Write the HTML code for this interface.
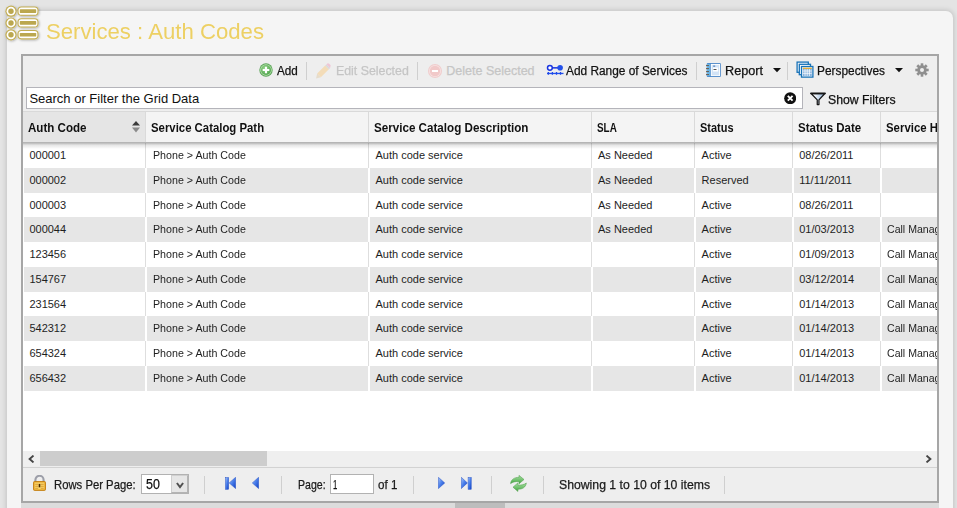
<!DOCTYPE html>
<html><head><meta charset="utf-8"><style>
*{box-sizing:border-box;margin:0;padding:0}
html,body{width:957px;height:508px;overflow:hidden;background:#e4e4e4;font-family:"Liberation Sans",sans-serif;}
.a{position:absolute}
.t{position:absolute;white-space:nowrap;line-height:1;transform-origin:0 0}
.hv2{-webkit-text-stroke:0.25px currentColor}
#panel{position:absolute;left:7px;top:11px;width:946px;height:520px;background:#f5f5f5;border-radius:7px;box-shadow:0 0 5px 1px rgba(0,0,0,.15)}
#grid{position:absolute;left:21px;top:54px;width:918px;height:449px;border:2px solid #a6a6a6;background:#fff}
#gc{position:absolute;left:0;top:0;width:937px;height:501px;overflow:hidden}
.sep{position:absolute;width:1px;background:#cfcfcf}
</style></head><body>
<div id="panel"></div>
<svg class="a" style="left:0;top:0.4px" width="45" height="45" viewBox="0 0 45 45">
  <defs><filter id="sh" x="-20%" y="-20%" width="140%" height="140%"><feDropShadow dx="0.8" dy="0.8" stdDeviation="0.9" flood-color="#000" flood-opacity=".3"/></filter></defs>
  <g filter="url(#sh)" fill="#c3ae55">
    <circle cx="11" cy="11.2" r="5.6"/><circle cx="11" cy="23" r="5.6"/><circle cx="11" cy="34.8" r="5.6"/>
    <rect x="17.5" y="6.4" width="21" height="9.4" rx="3.8"/><rect x="17.5" y="18.2" width="21" height="9.4" rx="3.8"/><rect x="17.5" y="30" width="21" height="9.4" rx="3.8"/>
  </g>
  <g fill="#fff">
    <circle cx="11" cy="11.2" r="4.4"/><circle cx="11" cy="23" r="4.4"/><circle cx="11" cy="34.8" r="4.4"/>
    <rect x="18.6" y="7.5" width="18.8" height="7.2" rx="2.8"/><rect x="18.6" y="19.3" width="18.8" height="7.2" rx="2.8"/><rect x="18.6" y="31.1" width="18.8" height="7.2" rx="2.8"/>
  </g>
  <g fill="#bba74f">
    <circle cx="11" cy="11.2" r="2.7"/><circle cx="11" cy="23" r="2.7"/><circle cx="11" cy="34.8" r="2.7"/>
    <rect x="19.8" y="9.3" width="16.4" height="3.6" rx="0.6"/><rect x="19.8" y="21.1" width="16.4" height="3.6" rx="0.6"/><rect x="19.8" y="32.9" width="16.4" height="3.6" rx="0.6"/>
  </g>
</svg>
<div class="t " style="left:46.30px;top:21.48px;font-size:22px;color:#edd063;transform:scaleX(1.0070);">Services : Auth Codes</div>
<div class="a" style="left:21px;top:503px;width:918px;height:10px;background:#dcdcdc"></div>
<div class="a" style="left:455px;top:503px;width:50px;height:10px;background:#bdbdbd"></div>
<div id="grid"></div>
<div id="gc">
<div class="a" style="left:23px;top:56px;width:914px;height:55px;background:#eeeeee"></div>
<svg class="a" style="left:259px;top:63px" width="14" height="14" viewBox="0 0 14 14">
 <defs><radialGradient id="ga" cx="0.4" cy="0.35" r="0.7"><stop offset="0" stop-color="#9ad88e"/><stop offset="1" stop-color="#4ea24c"/></radialGradient></defs>
 <circle cx="7" cy="7" r="6.7" fill="#5aa457"/><circle cx="7" cy="7" r="5.8" fill="#b9e3b0"/><circle cx="7" cy="7" r="5" fill="url(#ga)"/>
 <path d="M7 3.7v6.6M3.7 7h6.6" stroke="#fff" stroke-width="2.1"/></svg>
<div class="t hv2" style="left:277.00px;top:64.80px;font-size:12.5px;color:#111;transform:scaleX(0.9348);">Add</div>
<div class="sep" style="left:306px;top:62px;height:18px"></div>
<svg class="a" style="left:315px;top:62.5px" width="16" height="16" viewBox="0 0 16 16">
 <path d="M1 15.5 L2.2 10.6 L5.9 14.3 Z" fill="#e6dccb"/>
 <path d="M2.2 10.6 L10.2 2.6 L13.9 6.3 L5.9 14.3 Z" fill="#f3dcb8"/>
 <path d="M10.2 2.6 L11.4 1.4 L15.1 5.1 L13.9 6.3 Z" fill="#d9d9dc"/>
 <path d="M11.4 1.4 L12.4 0.4 Q13.2 -0.2 14.2 0.8 L15.2 1.8 Q16 2.8 15.4 3.6 L15.1 5.1 Z" fill="#efc6d6"/></svg>
<div class="t hv2" style="left:335.60px;top:64.80px;font-size:12.5px;color:#c5c5c5;transform:scaleX(0.9880);">Edit Selected</div>
<div class="sep" style="left:417px;top:62px;height:18px"></div>
<svg class="a" style="left:428px;top:64px" width="14" height="14" viewBox="0 0 14 14">
 <circle cx="7" cy="7" r="7" fill="#f0cccc"/><circle cx="7" cy="7" r="6" fill="#f7e2e2"/><circle cx="7" cy="7" r="5.2" fill="#f1c9c9"/><rect x="4" y="6" width="6" height="2" fill="#fff"/></svg>
<div class="t hv2" style="left:446.30px;top:64.80px;font-size:12.5px;color:#c5c5c5;">Delete Selected</div>
<svg class="a" style="left:546px;top:63px" width="18" height="13" viewBox="0 0 18 13">
 <circle cx="3.9" cy="4.8" r="2.4" fill="#fff" stroke="#1a35e0" stroke-width="1.5"/><rect x="6" y="4.1" width="6" height="1.5" fill="#1a35e0"/><circle cx="14.1" cy="4.8" r="2.8" fill="#2250ea"/>
 <rect x="1" y="9.8" width="16.5" height="1.3" fill="#2050ee"/><path d="M2.4 8.9v2.9M6.4 8.9v2.9M10.5 8.9v2.9M14.5 8.9v2.9" stroke="#1f48ea" stroke-width="1.3"/></svg>
<div class="t hv2" style="left:566.30px;top:64.80px;font-size:12.5px;color:#111;transform:scaleX(0.9501);">Add Range of Services</div>
<div class="sep" style="left:696px;top:62px;height:18px"></div>
<svg class="a" style="left:706px;top:63px" width="15" height="14" viewBox="0 0 15 14">
 <rect x="0.8" y="0" width="14" height="14" rx="1" fill="#4a86c8"/><rect x="0.8" y="0.8" width="3.4" height="12.4" fill="#6ab4e4"/>
 <rect x="4.8" y="0.9" width="9.2" height="12.2" fill="#fff"/><rect x="5.7" y="1.9" width="7.5" height="10.4" fill="#d2e3f6"/>
 <rect x="7" y="4.5" width="5" height="4" fill="#fff"/><path d="M7.5 6.5h3" stroke="#555" stroke-width="1"/><rect x="7.2" y="2.6" width="2" height="1" fill="#3366aa"/>
 <path d="M0 2.6h3M0 5.6h3M0 8.6h3M0 11.6h3" stroke="#6d5a48" stroke-width="1"/></svg>
<div class="t hv2" style="left:725.00px;top:64.80px;font-size:12.5px;color:#111;transform:scaleX(1.0133);">Report</div>
<svg class="a" style="left:773px;top:68px" width="8" height="5" viewBox="0 0 8 5"><path d="M0 0h8L4 4.2z" fill="#111"/></svg>
<div class="sep" style="left:787px;top:62px;height:18px"></div>
<svg class="a" style="left:796px;top:61px" width="18" height="17" viewBox="0 0 18 17">
 <rect x="1.1" y="1.1" width="11.2" height="10.2" fill="#fff" stroke="#1873b8" stroke-width="1.3"/>
 <rect x="3.3" y="3.3" width="11.2" height="10.4" fill="#fff" stroke="#1873b8" stroke-width="1.3"/>
 <rect x="5.5" y="5.5" width="11.4" height="10.6" fill="#fff" stroke="#1873b8" stroke-width="1.3"/>
 <rect x="6.8" y="6.8" width="9" height="8.2" fill="#86b0dc"/>
 <path d="M9 8v7M11.2 8v7M13.4 8v7M6.8 10h9M6.8 12.3h9" stroke="#fff" stroke-width="0.75"/>
 <path d="M6.8 7.3h9" stroke="#f0b02a" stroke-width="1.2"/></svg>
<div class="t hv2" style="left:816.50px;top:64.80px;font-size:12.5px;color:#111;transform:scaleX(0.9502);">Perspectives</div>
<svg class="a" style="left:895px;top:68px" width="8" height="5" viewBox="0 0 8 5"><path d="M0 0h8L4 4.2z" fill="#111"/></svg>
<svg class="a" style="left:915px;top:63px" width="14" height="14" viewBox="0 0 14 14">
 <g fill="#8f8f8f"><circle cx="7" cy="7" r="4.7"/>
 <rect x="5.7" y="0.3" width="2.6" height="13.4"/><rect x="0.3" y="5.7" width="13.4" height="2.6"/>
 <rect x="5.7" y="0.3" width="2.6" height="13.4" transform="rotate(45 7 7)"/><rect x="5.7" y="0.3" width="2.6" height="13.4" transform="rotate(-45 7 7)"/></g>
 <circle cx="7" cy="7" r="2" fill="#eeeeee"/></svg>
<div class="a" style="left:26px;top:87px;width:777px;height:22px;background:#fff;border:1px solid #b4b4ba"></div>
<div class="t " style="left:29.40px;top:91.72px;font-size:13px;color:#111;">Search or Filter the Grid Data</div>
<svg class="a" style="left:784px;top:91.7px" width="12.4" height="12.4" viewBox="0 0 13 13"><circle cx="6.5" cy="6.5" r="6.3" fill="#111"/><path d="M4 4l5 5M9 4l-5 5" stroke="#fff" stroke-width="2"/></svg>
<svg class="a" style="left:809.5px;top:91.5px" width="16" height="14" viewBox="0 0 16 14">
 <defs><linearGradient id="gf" x1="0" x2="1"><stop offset="0.2" stop-color="#ffffff"/><stop offset="1" stop-color="#86acd6"/></linearGradient></defs>
 <path d="M1.1 1.5 H14.9 L8.95 7.9 V12.6 H7.25 V7.9 Z" fill="url(#gf)" stroke="#161616" stroke-width="1.25" stroke-linejoin="round"/><path d="M1 1.3H15" stroke="#161616" stroke-width="1.8" stroke-linecap="round"/></svg>
<div class="t hv2" style="left:827.70px;top:93.80px;font-size:12.5px;color:#111;transform:scaleX(0.9818);">Show Filters</div>
<div class="a" style="left:23px;top:111px;width:914px;height:1px;background:#d9d9d9"></div>
<div class="a" style="left:23px;top:112px;width:914px;height:31px;background:#f4f4f4;border-bottom:1px solid #b5b5b5"></div>
<div class="a" style="left:23px;top:112px;width:122px;height:30px;background:#e5e5e5"></div>
<div class="a" style="left:23px;top:143px;width:914px;height:6px;background:linear-gradient(rgba(0,0,0,.28),rgba(0,0,0,.1) 35%,rgba(0,0,0,0))"></div>
<div class="a" style="left:145px;top:112px;width:1px;height:30px;background:#dadada"></div>
<div class="a" style="left:368px;top:112px;width:1px;height:30px;background:#dadada"></div>
<div class="a" style="left:591px;top:112px;width:1px;height:30px;background:#dadada"></div>
<div class="a" style="left:694px;top:112px;width:1px;height:30px;background:#dadada"></div>
<div class="a" style="left:792px;top:112px;width:1px;height:30px;background:#dadada"></div>
<div class="a" style="left:880px;top:112px;width:1px;height:30px;background:#dadada"></div>
<div class="t " style="left:28.30px;top:122.28px;font-size:12px;font-weight:bold;color:#111;transform:scaleX(0.9644);">Auth Code</div>
<div class="t " style="left:151.40px;top:122.28px;font-size:12px;font-weight:bold;color:#111;transform:scaleX(0.9472);">Service Catalog Path</div>
<div class="t " style="left:374.30px;top:122.28px;font-size:12px;font-weight:bold;color:#111;transform:scaleX(0.9691);">Service Catalog Description</div>
<div class="t " style="left:597.20px;top:122.28px;font-size:12px;font-weight:bold;color:#111;transform:scaleX(0.8250);">SLA</div>
<div class="t " style="left:700.40px;top:122.28px;font-size:12px;font-weight:bold;color:#111;transform:scaleX(0.9138);">Status</div>
<div class="t " style="left:798.40px;top:122.28px;font-size:12px;font-weight:bold;color:#111;transform:scaleX(0.9576);">Status Date</div>
<div class="t " style="left:885.90px;top:122.28px;font-size:12px;font-weight:bold;color:#111;transform:scaleX(0.9500);">Service Hours</div>
<svg class="a" style="left:131.5px;top:120.5px" width="8" height="12" viewBox="0 0 8 12"><path d="M0 4.6h8L4 0z" fill="#3a3a3a"/><path d="M0 6.6h8L4 11.4z" fill="#8a8a8a"/></svg>
<div class="a" style="left:23px;top:143px;width:914px;height:25px;background:#fff"></div>
<div class="a" style="left:145px;top:143.00px;width:1px;height:25px;background:#dedede"></div>
<div class="a" style="left:368px;top:143.00px;width:1px;height:25px;background:#dedede"></div>
<div class="a" style="left:591px;top:143.00px;width:1px;height:25px;background:#dedede"></div>
<div class="a" style="left:694px;top:143.00px;width:1px;height:25px;background:#dedede"></div>
<div class="a" style="left:792px;top:143.00px;width:1px;height:25px;background:#dedede"></div>
<div class="a" style="left:880px;top:143.00px;width:1px;height:25px;background:#dedede"></div>
<div class="t " style="left:29.40px;top:150.34px;font-size:11px;color:#1e1e1e;">000001</div>
<div class="t " style="left:152.70px;top:150.34px;font-size:11px;color:#1e1e1e;transform:scaleX(0.9700);">Phone &gt; Auth Code</div>
<div class="t " style="left:375.50px;top:150.34px;font-size:11px;color:#1e1e1e;">Auth code service</div>
<div class="t " style="left:598.00px;top:150.34px;font-size:11px;color:#1e1e1e;">As Needed</div>
<div class="t " style="left:701.60px;top:150.34px;font-size:11px;color:#1e1e1e;">Active</div>
<div class="t " style="left:799.20px;top:150.34px;font-size:11px;color:#1e1e1e;">08/26/2011</div>
<div class="a" style="left:23px;top:168px;width:914px;height:25px;background:#e6e6e6"></div>
<div class="a" style="left:23px;top:168px;width:1px;height:25px;background:#fff"></div>
<div class="a" style="left:145px;top:168.00px;width:2px;height:25px;background:#fff"></div>
<div class="a" style="left:368px;top:168.00px;width:2px;height:25px;background:#fff"></div>
<div class="a" style="left:591px;top:168.00px;width:2px;height:25px;background:#fff"></div>
<div class="a" style="left:694px;top:168.00px;width:2px;height:25px;background:#fff"></div>
<div class="a" style="left:792px;top:168.00px;width:2px;height:25px;background:#fff"></div>
<div class="a" style="left:880px;top:168.00px;width:2px;height:25px;background:#fff"></div>
<div class="t " style="left:29.40px;top:175.05px;font-size:11px;color:#1e1e1e;">000002</div>
<div class="t " style="left:152.70px;top:175.05px;font-size:11px;color:#1e1e1e;transform:scaleX(0.9700);">Phone &gt; Auth Code</div>
<div class="t " style="left:375.50px;top:175.05px;font-size:11px;color:#1e1e1e;">Auth code service</div>
<div class="t " style="left:598.00px;top:175.05px;font-size:11px;color:#1e1e1e;">As Needed</div>
<div class="t " style="left:701.60px;top:175.05px;font-size:11px;color:#1e1e1e;">Reserved</div>
<div class="t " style="left:799.20px;top:175.05px;font-size:11px;color:#1e1e1e;">11/11/2011</div>
<div class="a" style="left:23px;top:193px;width:914px;height:24px;background:#fff"></div>
<div class="a" style="left:145px;top:193.00px;width:1px;height:24px;background:#dedede"></div>
<div class="a" style="left:368px;top:193.00px;width:1px;height:24px;background:#dedede"></div>
<div class="a" style="left:591px;top:193.00px;width:1px;height:24px;background:#dedede"></div>
<div class="a" style="left:694px;top:193.00px;width:1px;height:24px;background:#dedede"></div>
<div class="a" style="left:792px;top:193.00px;width:1px;height:24px;background:#dedede"></div>
<div class="a" style="left:880px;top:193.00px;width:1px;height:24px;background:#dedede"></div>
<div class="t " style="left:29.40px;top:199.76px;font-size:11px;color:#1e1e1e;">000003</div>
<div class="t " style="left:152.70px;top:199.76px;font-size:11px;color:#1e1e1e;transform:scaleX(0.9700);">Phone &gt; Auth Code</div>
<div class="t " style="left:375.50px;top:199.76px;font-size:11px;color:#1e1e1e;">Auth code service</div>
<div class="t " style="left:598.00px;top:199.76px;font-size:11px;color:#1e1e1e;">As Needed</div>
<div class="t " style="left:701.60px;top:199.76px;font-size:11px;color:#1e1e1e;">Active</div>
<div class="t " style="left:799.20px;top:199.76px;font-size:11px;color:#1e1e1e;">08/26/2011</div>
<div class="a" style="left:23px;top:217px;width:914px;height:25px;background:#e6e6e6"></div>
<div class="a" style="left:23px;top:217px;width:1px;height:25px;background:#fff"></div>
<div class="a" style="left:145px;top:217.00px;width:2px;height:25px;background:#fff"></div>
<div class="a" style="left:368px;top:217.00px;width:2px;height:25px;background:#fff"></div>
<div class="a" style="left:591px;top:217.00px;width:2px;height:25px;background:#fff"></div>
<div class="a" style="left:694px;top:217.00px;width:2px;height:25px;background:#fff"></div>
<div class="a" style="left:792px;top:217.00px;width:2px;height:25px;background:#fff"></div>
<div class="a" style="left:880px;top:217.00px;width:2px;height:25px;background:#fff"></div>
<div class="t " style="left:29.40px;top:224.47px;font-size:11px;color:#1e1e1e;">000044</div>
<div class="t " style="left:152.70px;top:224.47px;font-size:11px;color:#1e1e1e;transform:scaleX(0.9700);">Phone &gt; Auth Code</div>
<div class="t " style="left:375.50px;top:224.47px;font-size:11px;color:#1e1e1e;">Auth code service</div>
<div class="t " style="left:598.00px;top:224.47px;font-size:11px;color:#1e1e1e;">As Needed</div>
<div class="t " style="left:701.60px;top:224.47px;font-size:11px;color:#1e1e1e;">Active</div>
<div class="t " style="left:799.20px;top:224.47px;font-size:11px;color:#1e1e1e;">01/03/2013</div>
<div class="t " style="left:887.20px;top:224.47px;font-size:11px;color:#1e1e1e;transform:scaleX(0.9600);">Call Manager</div>
<div class="a" style="left:23px;top:242px;width:914px;height:25px;background:#fff"></div>
<div class="a" style="left:145px;top:242.00px;width:1px;height:25px;background:#dedede"></div>
<div class="a" style="left:368px;top:242.00px;width:1px;height:25px;background:#dedede"></div>
<div class="a" style="left:591px;top:242.00px;width:1px;height:25px;background:#dedede"></div>
<div class="a" style="left:694px;top:242.00px;width:1px;height:25px;background:#dedede"></div>
<div class="a" style="left:792px;top:242.00px;width:1px;height:25px;background:#dedede"></div>
<div class="a" style="left:880px;top:242.00px;width:1px;height:25px;background:#dedede"></div>
<div class="t " style="left:29.40px;top:249.18px;font-size:11px;color:#1e1e1e;">123456</div>
<div class="t " style="left:152.70px;top:249.18px;font-size:11px;color:#1e1e1e;transform:scaleX(0.9700);">Phone &gt; Auth Code</div>
<div class="t " style="left:375.50px;top:249.18px;font-size:11px;color:#1e1e1e;">Auth code service</div>
<div class="t " style="left:701.60px;top:249.18px;font-size:11px;color:#1e1e1e;">Active</div>
<div class="t " style="left:799.20px;top:249.18px;font-size:11px;color:#1e1e1e;">01/09/2013</div>
<div class="t " style="left:887.20px;top:249.18px;font-size:11px;color:#1e1e1e;transform:scaleX(0.9600);">Call Manager</div>
<div class="a" style="left:23px;top:267px;width:914px;height:25px;background:#e6e6e6"></div>
<div class="a" style="left:23px;top:267px;width:1px;height:25px;background:#fff"></div>
<div class="a" style="left:145px;top:267.00px;width:2px;height:25px;background:#fff"></div>
<div class="a" style="left:368px;top:267.00px;width:2px;height:25px;background:#fff"></div>
<div class="a" style="left:591px;top:267.00px;width:2px;height:25px;background:#fff"></div>
<div class="a" style="left:694px;top:267.00px;width:2px;height:25px;background:#fff"></div>
<div class="a" style="left:792px;top:267.00px;width:2px;height:25px;background:#fff"></div>
<div class="a" style="left:880px;top:267.00px;width:2px;height:25px;background:#fff"></div>
<div class="t " style="left:29.40px;top:273.89px;font-size:11px;color:#1e1e1e;">154767</div>
<div class="t " style="left:152.70px;top:273.89px;font-size:11px;color:#1e1e1e;transform:scaleX(0.9700);">Phone &gt; Auth Code</div>
<div class="t " style="left:375.50px;top:273.89px;font-size:11px;color:#1e1e1e;">Auth code service</div>
<div class="t " style="left:701.60px;top:273.89px;font-size:11px;color:#1e1e1e;">Active</div>
<div class="t " style="left:799.20px;top:273.89px;font-size:11px;color:#1e1e1e;">03/12/2014</div>
<div class="t " style="left:887.20px;top:273.89px;font-size:11px;color:#1e1e1e;transform:scaleX(0.9600);">Call Manager</div>
<div class="a" style="left:23px;top:292px;width:914px;height:24px;background:#fff"></div>
<div class="a" style="left:145px;top:292.00px;width:1px;height:24px;background:#dedede"></div>
<div class="a" style="left:368px;top:292.00px;width:1px;height:24px;background:#dedede"></div>
<div class="a" style="left:591px;top:292.00px;width:1px;height:24px;background:#dedede"></div>
<div class="a" style="left:694px;top:292.00px;width:1px;height:24px;background:#dedede"></div>
<div class="a" style="left:792px;top:292.00px;width:1px;height:24px;background:#dedede"></div>
<div class="a" style="left:880px;top:292.00px;width:1px;height:24px;background:#dedede"></div>
<div class="t " style="left:29.40px;top:298.60px;font-size:11px;color:#1e1e1e;">231564</div>
<div class="t " style="left:152.70px;top:298.60px;font-size:11px;color:#1e1e1e;transform:scaleX(0.9700);">Phone &gt; Auth Code</div>
<div class="t " style="left:375.50px;top:298.60px;font-size:11px;color:#1e1e1e;">Auth code service</div>
<div class="t " style="left:701.60px;top:298.60px;font-size:11px;color:#1e1e1e;">Active</div>
<div class="t " style="left:799.20px;top:298.60px;font-size:11px;color:#1e1e1e;">01/14/2013</div>
<div class="t " style="left:887.20px;top:298.60px;font-size:11px;color:#1e1e1e;transform:scaleX(0.9600);">Call Manager</div>
<div class="a" style="left:23px;top:316px;width:914px;height:25px;background:#e6e6e6"></div>
<div class="a" style="left:23px;top:316px;width:1px;height:25px;background:#fff"></div>
<div class="a" style="left:145px;top:316.00px;width:2px;height:25px;background:#fff"></div>
<div class="a" style="left:368px;top:316.00px;width:2px;height:25px;background:#fff"></div>
<div class="a" style="left:591px;top:316.00px;width:2px;height:25px;background:#fff"></div>
<div class="a" style="left:694px;top:316.00px;width:2px;height:25px;background:#fff"></div>
<div class="a" style="left:792px;top:316.00px;width:2px;height:25px;background:#fff"></div>
<div class="a" style="left:880px;top:316.00px;width:2px;height:25px;background:#fff"></div>
<div class="t " style="left:29.40px;top:323.31px;font-size:11px;color:#1e1e1e;">542312</div>
<div class="t " style="left:152.70px;top:323.31px;font-size:11px;color:#1e1e1e;transform:scaleX(0.9700);">Phone &gt; Auth Code</div>
<div class="t " style="left:375.50px;top:323.31px;font-size:11px;color:#1e1e1e;">Auth code service</div>
<div class="t " style="left:701.60px;top:323.31px;font-size:11px;color:#1e1e1e;">Active</div>
<div class="t " style="left:799.20px;top:323.31px;font-size:11px;color:#1e1e1e;">01/14/2013</div>
<div class="t " style="left:887.20px;top:323.31px;font-size:11px;color:#1e1e1e;transform:scaleX(0.9600);">Call Manager</div>
<div class="a" style="left:23px;top:341px;width:914px;height:25px;background:#fff"></div>
<div class="a" style="left:145px;top:341.00px;width:1px;height:25px;background:#dedede"></div>
<div class="a" style="left:368px;top:341.00px;width:1px;height:25px;background:#dedede"></div>
<div class="a" style="left:591px;top:341.00px;width:1px;height:25px;background:#dedede"></div>
<div class="a" style="left:694px;top:341.00px;width:1px;height:25px;background:#dedede"></div>
<div class="a" style="left:792px;top:341.00px;width:1px;height:25px;background:#dedede"></div>
<div class="a" style="left:880px;top:341.00px;width:1px;height:25px;background:#dedede"></div>
<div class="t " style="left:29.40px;top:348.02px;font-size:11px;color:#1e1e1e;">654324</div>
<div class="t " style="left:152.70px;top:348.02px;font-size:11px;color:#1e1e1e;transform:scaleX(0.9700);">Phone &gt; Auth Code</div>
<div class="t " style="left:375.50px;top:348.02px;font-size:11px;color:#1e1e1e;">Auth code service</div>
<div class="t " style="left:701.60px;top:348.02px;font-size:11px;color:#1e1e1e;">Active</div>
<div class="t " style="left:799.20px;top:348.02px;font-size:11px;color:#1e1e1e;">01/14/2013</div>
<div class="t " style="left:887.20px;top:348.02px;font-size:11px;color:#1e1e1e;transform:scaleX(0.9600);">Call Manager</div>
<div class="a" style="left:23px;top:366px;width:914px;height:25px;background:#e6e6e6"></div>
<div class="a" style="left:23px;top:366px;width:1px;height:25px;background:#fff"></div>
<div class="a" style="left:145px;top:366.00px;width:2px;height:25px;background:#fff"></div>
<div class="a" style="left:368px;top:366.00px;width:2px;height:25px;background:#fff"></div>
<div class="a" style="left:591px;top:366.00px;width:2px;height:25px;background:#fff"></div>
<div class="a" style="left:694px;top:366.00px;width:2px;height:25px;background:#fff"></div>
<div class="a" style="left:792px;top:366.00px;width:2px;height:25px;background:#fff"></div>
<div class="a" style="left:880px;top:366.00px;width:2px;height:25px;background:#fff"></div>
<div class="t " style="left:29.40px;top:372.73px;font-size:11px;color:#1e1e1e;">656432</div>
<div class="t " style="left:152.70px;top:372.73px;font-size:11px;color:#1e1e1e;transform:scaleX(0.9700);">Phone &gt; Auth Code</div>
<div class="t " style="left:375.50px;top:372.73px;font-size:11px;color:#1e1e1e;">Auth code service</div>
<div class="t " style="left:701.60px;top:372.73px;font-size:11px;color:#1e1e1e;">Active</div>
<div class="t " style="left:799.20px;top:372.73px;font-size:11px;color:#1e1e1e;">01/14/2013</div>
<div class="t " style="left:887.20px;top:372.73px;font-size:11px;color:#1e1e1e;transform:scaleX(0.9600);">Call Manager</div>
<div class="a" style="left:23px;top:143px;width:914px;height:6px;background:linear-gradient(rgba(0,0,0,.28),rgba(0,0,0,.1) 35%,rgba(0,0,0,0))"></div>
<div class="a" style="left:23px;top:451px;width:914px;height:15px;background:#efefef"></div>
<div class="a" style="left:40px;top:451px;width:227px;height:15px;background:#cdcdcd"></div>
<svg class="a" style="left:28px;top:455px" width="7" height="8" viewBox="0 0 7 8"><path d="M5.5 0.6L1.6 4l3.9 3.4" fill="none" stroke="#444" stroke-width="1.9"/></svg>
<svg class="a" style="left:925px;top:455px" width="7" height="8" viewBox="0 0 7 8"><path d="M1.5 0.6L5.4 4l-3.9 3.4" fill="none" stroke="#444" stroke-width="1.9"/></svg>
<div class="a" style="left:23px;top:466px;width:914px;height:35px;background:#eeeeee"></div>
<div class="a" style="left:23px;top:467px;width:914px;height:1px;background:#d2d2d2"></div>
<svg class="a" style="left:32.5px;top:474.5px" width="13" height="16" viewBox="0 0 13 16">
 <path d="M2.4 7V4.9a4.1 4.1 0 0 1 8.2 0V7" fill="none" stroke="#9c9ea8" stroke-width="2.1"/>
 <rect x="0.5" y="6.5" width="12" height="8.9" rx="1" fill="#e6a224" stroke="#c27d10" stroke-width="0.9"/>
 <rect x="1.6" y="7.5" width="9.8" height="6.9" fill="#f7d46a"/>
 <path d="M2.2 9.3h3M2.2 11.3h3M2.2 13.3h3M7.8 9.3h3M7.8 11.3h3M7.8 13.3h3" stroke="#d9982c" stroke-width="0.9"/>
 <rect x="5.7" y="8.9" width="1.6" height="3.4" fill="#4a2800"/></svg>
<div class="t hv2" style="left:54.40px;top:478.22px;font-size:13px;color:#1a1a1a;transform:scaleX(0.8688);">Rows Per Page:</div>
<div class="a" style="left:141px;top:474px;width:48px;height:20px;background:#fff;border:1px solid #b2b2b2"></div>
<div class="a" style="left:171px;top:475px;width:17px;height:18px;background:#e6e6e6;border:1px solid #b4b4b4;border-left-color:#cfcfcf;border-top-color:#d0d0d0"></div>
<svg class="a" style="left:175.5px;top:481.5px" width="8" height="7" viewBox="0 0 8 7"><path d="M0.9 1L4 5l3.1-4" fill="none" stroke="#505050" stroke-width="2"/></svg>
<div class="t hv2" style="left:146.00px;top:477.06px;font-size:14px;color:#111;transform:scaleX(0.8880);">50</div>
<div class="sep" style="left:204px;top:476px;height:18px"></div>
<svg class="a" style="left:224.5px;top:476.5px" width="11" height="13" viewBox="0 0 11 13">
 <defs><linearGradient id="gn" x1="0" y1="0" x2="1" y2="1"><stop offset="0" stop-color="#a9c6f7"/><stop offset="0.45" stop-color="#4d82ec"/><stop offset="1" stop-color="#0f3fc4"/></linearGradient></defs>
 <rect x="0.5" y="0.6" width="3.1" height="11.7" fill="url(#gn)" stroke="#2451c6" stroke-width="0.5"/><path d="M10.6 0.3V11.6L4.2 5.95z" fill="url(#gn)" stroke="#2451c6" stroke-width="0.5"/></svg>
<svg class="a" style="left:251.5px;top:476.5px" width="7" height="12" viewBox="0 0 7 12"><path d="M6.6 0.3V11.6L0.3 5.95z" fill="url(#gn)" stroke="#2451c6" stroke-width="0.5"/></svg>
<div class="sep" style="left:281px;top:476px;height:18px"></div>
<div class="t hv2" style="left:297.50px;top:478.22px;font-size:13px;color:#1a1a1a;transform:scaleX(0.8119);">Page:</div>
<div class="a" style="left:330px;top:474px;width:44px;height:20px;background:#fff;border:1px solid #b2b2b2"></div>
<div class="t hv2" style="left:333.30px;top:477.92px;font-size:13px;color:#111;transform:scaleX(0.5960);">1</div>
<div class="t hv2" style="left:378.40px;top:478.22px;font-size:13px;color:#1a1a1a;transform:scaleX(0.8936);">of 1</div>
<div class="sep" style="left:413px;top:476px;height:18px"></div>
<svg class="a" style="left:437.5px;top:476.5px" width="7" height="12" viewBox="0 0 7 12"><path d="M0.4 0.3V11.6L6.7 5.95z" fill="url(#gn)" stroke="#2451c6" stroke-width="0.5"/></svg>
<svg class="a" style="left:461px;top:476.5px" width="11" height="13" viewBox="0 0 11 13"><path d="M0.3 0.3V11.6L6.4 5.95z" fill="url(#gn)" stroke="#2451c6" stroke-width="0.5"/><rect x="7.1" y="0.6" width="3.1" height="11.7" fill="url(#gn)" stroke="#2451c6" stroke-width="0.5"/></svg>
<div class="sep" style="left:491px;top:476px;height:18px"></div>
<svg class="a" style="left:509.5px;top:474.5px" width="17" height="17" viewBox="0 0 17 17">
 <defs><linearGradient id="gr" x1="0" y1="0" x2="0" y2="1"><stop offset="0" stop-color="#a6dca2"/><stop offset="0.6" stop-color="#6cbf68"/><stop offset="1" stop-color="#3f9a3c"/></linearGradient></defs>
 <path d="M0.6 8.6 C1 4.5 4.5 2.2 9 2.4 L9 0.4 L14 4.5 L9 8.8 L9 6.5 C5.5 6.3 2.5 7 0.6 8.6 Z" fill="url(#gr)" stroke="#55a551" stroke-width="0.6" stroke-linejoin="round"/>
 <path d="M16.3 8 C15.9 12.1 12.4 14.4 7.9 14.2 L7.9 16.4 L3 12.2 L7.9 7.9 L7.9 10.1 C11.4 10.3 14.4 9.6 16.3 8 Z" fill="url(#gr)" stroke="#55a551" stroke-width="0.6" stroke-linejoin="round"/></svg>
<div class="sep" style="left:543px;top:476px;height:18px"></div>
<div class="t hv2" style="left:559.00px;top:478.22px;font-size:13px;color:#1a1a1a;transform:scaleX(0.9413);">Showing 1 to 10 of 10 items</div>
<div class="sep" style="left:724px;top:476px;height:18px"></div>
</div>
</body></html>
